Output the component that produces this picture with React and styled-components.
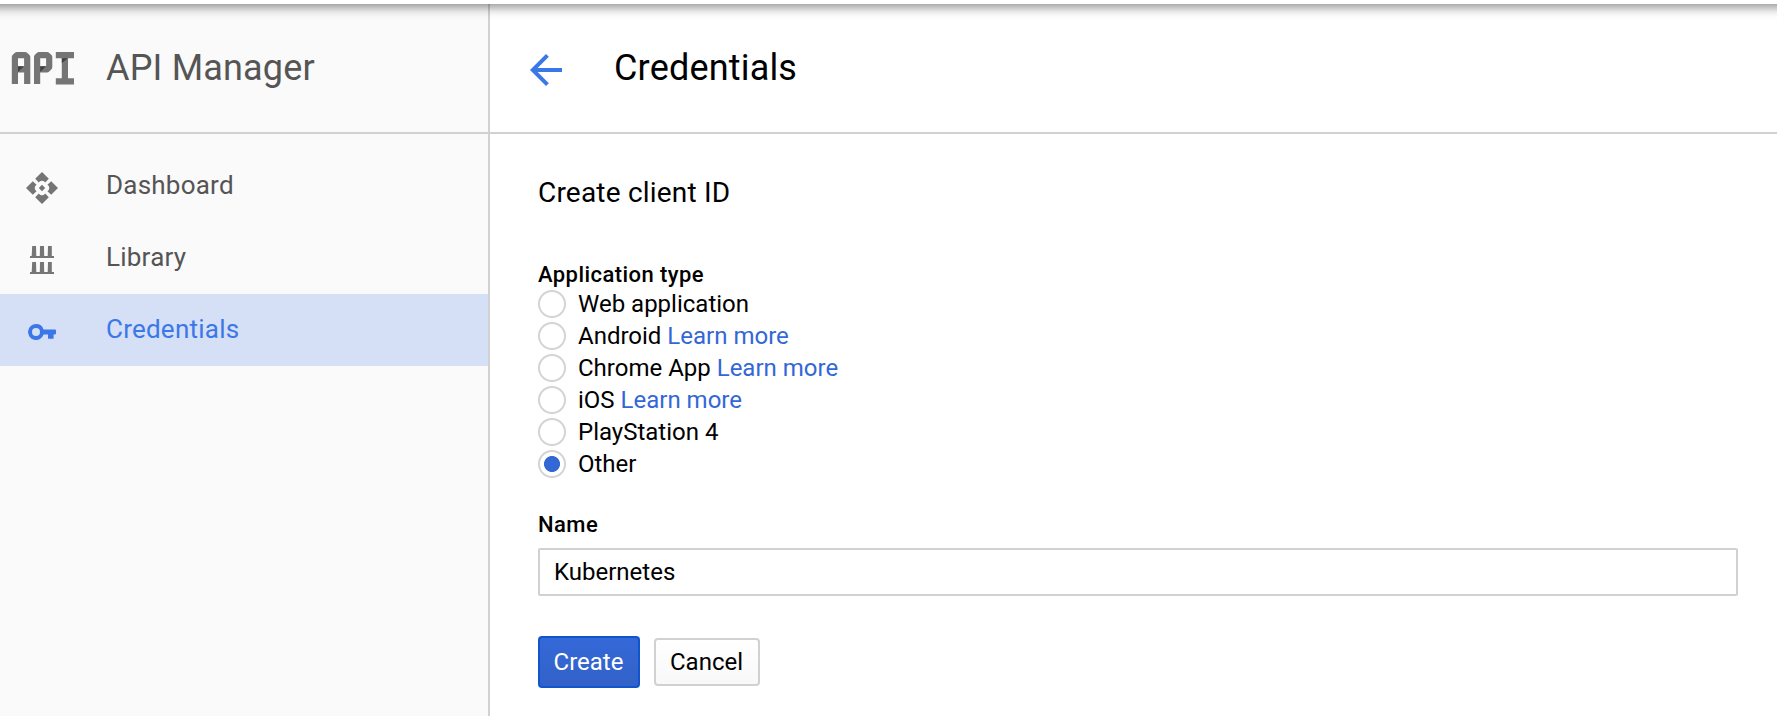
import React, { useState } from "react";
import styled, { createGlobalStyle, css } from "styled-components";
import { MdArrowBack } from "react-icons/md";

const GlobalStyle = createGlobalStyle`
  * { box-sizing: border-box; }
  body {
    margin: 0;
    background: #fff;
    color: #000;
    font-family: Roboto, "Liberation Sans", sans-serif;
    font-size: 24px;
  }
`;

const Page = styled.div`
  position: relative;
  display: grid;
  grid-template-columns: 490px 1fr;
  height: 716px;
  padding-top: 4px;
  overflow: hidden;
`;

const TopShadow = styled.div`
  position: absolute;
  inset: 4px 0 auto 0;
  height: 16px;
  background: linear-gradient(
    rgba(0, 0, 0, 0.33),
    rgba(0, 0, 0, 0.23) 20%,
    rgba(0, 0, 0, 0.08) 50%,
    rgba(0, 0, 0, 0.02) 75%,
    transparent
  );
  pointer-events: none;
`;

const Sidebar = styled.aside`
  background: #fafafa;
  border-right: 2px solid #d1d1d1;
`;

const Header = styled.header`
  display: flex;
  align-items: center;
  height: 130px;
  border-bottom: 2px solid #d1d1d1;
`;

const SidebarHeader = styled(Header)`
  padding-left: 10px;
`;

const MainHeader = styled(Header)`
  padding-left: 32px;
`;

const Title = styled.h1`
  margin: 0;
  font-size: 36px;
  font-weight: 400;
  line-height: 42px;
  letter-spacing: 0.18px;
  color: ${(p) => (p.$muted ? "#555" : "#000")};
  margin-left: ${(p) => p.$gap}px;
`;

const Nav = styled.nav`
  display: flex;
  flex-direction: column;
  padding-top: 16px;
`;

const NavItem = styled.a`
  display: flex;
  align-items: center;
  height: 72px;
  font-size: 26px;
  letter-spacing: 0.23px;
  color: #555;
  text-decoration: none;
  ${(p) =>
    p.$active &&
    css`
      background: #d5dff6;
      color: #3b78e7;
    `}
`;

const NavIcon = styled.span`
  display: flex;
  justify-content: center;
  width: 84px;
  margin-right: 22px;
  padding-top: 4px;
  color: ${(p) => (p.$active ? "#3b78e7" : "#757575")};
`;

const NavLabel = styled.span`
  line-height: 30px;
  padding-bottom: 3px;
`;

const BackButton = styled.button`
  display: flex;
  margin: 4px 0 0;
  padding: 0;
  border: 0;
  background: none;
  color: #3b78e7;
`;

const Form = styled.form`
  display: flex;
  flex-direction: column;
  padding: 42px 39px 0 48px;
`;

const FormTitle = styled.h2`
  margin: 0 0 51px;
  font-size: 28px;
  font-weight: 400;
  line-height: 34px;
  letter-spacing: 0.2px;
`;

const FieldLabel = styled.label`
  font-size: 22px;
  font-weight: 500;
  line-height: 28px;
  letter-spacing: 0.43px;
`;

const RadioList = styled.div`
  display: flex;
  flex-direction: column;
  gap: 4px;
  margin: 1px 0 33px;
`;

const RadioRow = styled.label`
  display: flex;
  align-items: center;
  height: 28px;
  line-height: 28px;
  white-space: pre;
`;

const Radio = styled.input`
  appearance: none;
  flex: none;
  width: 28px;
  height: 28px;
  margin: 0 12px 0 0;
  border: 2px solid #d4d4d4;
  border-radius: 50%;
  background: #fff;
  &:checked {
    background: radial-gradient(circle, #3367d6 7.6px, #fff 8.4px);
  }
`;

const Link = styled.a`
  color: #3367d6;
  text-decoration: none;
`;

const TextInput = styled.input`
  height: 48px;
  margin: 9px 0 40px;
  padding: 0 14px;
  border: 2px solid #d1d1d1;
  border-radius: 2px;
  font: inherit;
  color: #000;
  outline: 0;
`;

const Actions = styled.div`
  display: flex;
  align-items: center;
  gap: 14px;
`;

const Button = styled.button`
  width: 106px;
  height: 48px;
  padding: 0 1px 0 0;
  border: 2px solid #d1d1d1;
  border-radius: 4px;
  background: linear-gradient(#fff, #f8f8f8);
  color: #000;
  font: inherit;
  ${(p) =>
    p.$primary &&
    css`
      width: 102px;
      height: 52px;
      border-color: #1155cc;
      background: linear-gradient(#3568d8, #3262c8);
      color: #fff;
    `}
`;

function ApiLogo() {
  return (
    <svg width="66" height="34" viewBox="10 51 66 34" fill="none">
      <g stroke="#757575" strokeWidth="6.2" strokeLinejoin="round">
        <path d="M14.9 84V57L17 55.1H25L27.2 57V84M15 69.3H27" />
        <path d="M37.1 84V57L39 55.1H47L49.2 57V67L47 69.3H37.2" />
        <path d="M55.8 55.1H74M55.8 81.4H74M64.9 55V81" />
      </g>
      <path d="M18 66.2H24L18 72ZM40.2 66.2H46L40.2 72ZM61.8 58.2H68L61.8 63Z" fill="#424242" />
    </svg>
  );
}

function DashboardIcon() {
  return (
    <svg width="32" height="32" viewBox="0 0 32 32" fill="currentColor">
      {[0, 90, 180, 270].map((angle) => (
        <path
          key={angle}
          transform={`rotate(${angle} 16 16)`}
          d="M16 0L22.8 6.8L19.2 10.6L18 9.2Q16 8.2 14 9.2L12.8 10.6L9.2 6.8Z"
        />
      ))}
      <path d="M16 12.8L19.2 16L16 19.2L12.8 16Z" />
    </svg>
  );
}

function LibraryIcon() {
  return (
    <svg width="24" height="28" viewBox="0 0 24 28" fill="currentColor">
      {[0, 16].map((y) => (
        <path
          key={y}
          d={`M2.2 ${y}h3.8l.3 10h3.5l.2 -10h4l.2 10h3.5l.3 -10h3.8v10h2.2v2h-24v-2h1.7z`}
        />
      ))}
    </svg>
  );
}

function KeyIcon() {
  return (
    <svg width="28" height="16" viewBox="0 0 28 16" fill="currentColor">
      <path
        fillRule="evenodd"
        d="M8 0A8 8 0 1 0 15.6 10.6H20V14.2Q20 14.8 20.6 14.8H25Q25.6 14.8 25.6 14.2V10.6H26.8Q28 10.6 28 9.6V6.4Q28 5.4 27 5.4H15.6A8 8 0 0 0 8 0ZM8 4A4 4 0 1 1 8 12A4 4 0 1 1 8 4Z"
      />
    </svg>
  );
}

const NAV_ITEMS = [
  { label: "Dashboard", icon: <DashboardIcon /> },
  { label: "Library", icon: <LibraryIcon /> },
  { label: "Credentials", icon: <KeyIcon />, active: true },
];

const APP_TYPES = [
  { name: "Web application" },
  { name: "Android", help: true },
  { name: "Chrome App", help: true },
  { name: "iOS", help: true },
  { name: "PlayStation 4" },
  { name: "Other" },
];

export default function App() {
  const [type, setType] = useState("Other");
  const [name, setName] = useState("Kubernetes");

  return (
    <>
      <GlobalStyle />
      <Page>
        <Sidebar>
          <SidebarHeader>
            <ApiLogo />
            <Title as="div" $muted $gap={30}>API Manager</Title>
          </SidebarHeader>
          <Nav>
            {NAV_ITEMS.map((item) => (
              <NavItem key={item.label} $active={item.active}>
                <NavIcon $active={item.active}>{item.icon}</NavIcon>
                <NavLabel>{item.label}</NavLabel>
              </NavItem>
            ))}
          </Nav>
        </Sidebar>
        <main>
          <MainHeader>
            <BackButton aria-label="Back">
              <MdArrowBack size={48} />
            </BackButton>
            <Title $gap={44}>Credentials</Title>
          </MainHeader>
          <Form onSubmit={(e) => e.preventDefault()}>
            <FormTitle>Create client ID</FormTitle>
            <FieldLabel as="div">Application type</FieldLabel>
            <RadioList role="radiogroup">
              {APP_TYPES.map((t) => (
                <RadioRow key={t.name}>
                  <Radio
                    type="radio"
                    name="type"
                    checked={type === t.name}
                    onChange={() => setType(t.name)}
                  />
                  <span>
                    {t.name}
                    {t.help && <> <Link>Learn more</Link></>}
                  </span>
                </RadioRow>
              ))}
            </RadioList>
            <FieldLabel htmlFor="client-name">Name</FieldLabel>
            <TextInput
              id="client-name"
              value={name}
              onChange={(e) => setName(e.target.value)}
            />
            <Actions>
              <Button type="submit" $primary>Create</Button>
              <Button type="button">Cancel</Button>
            </Actions>
          </Form>
        </main>
        <TopShadow />
      </Page>
    </>
  );
}
